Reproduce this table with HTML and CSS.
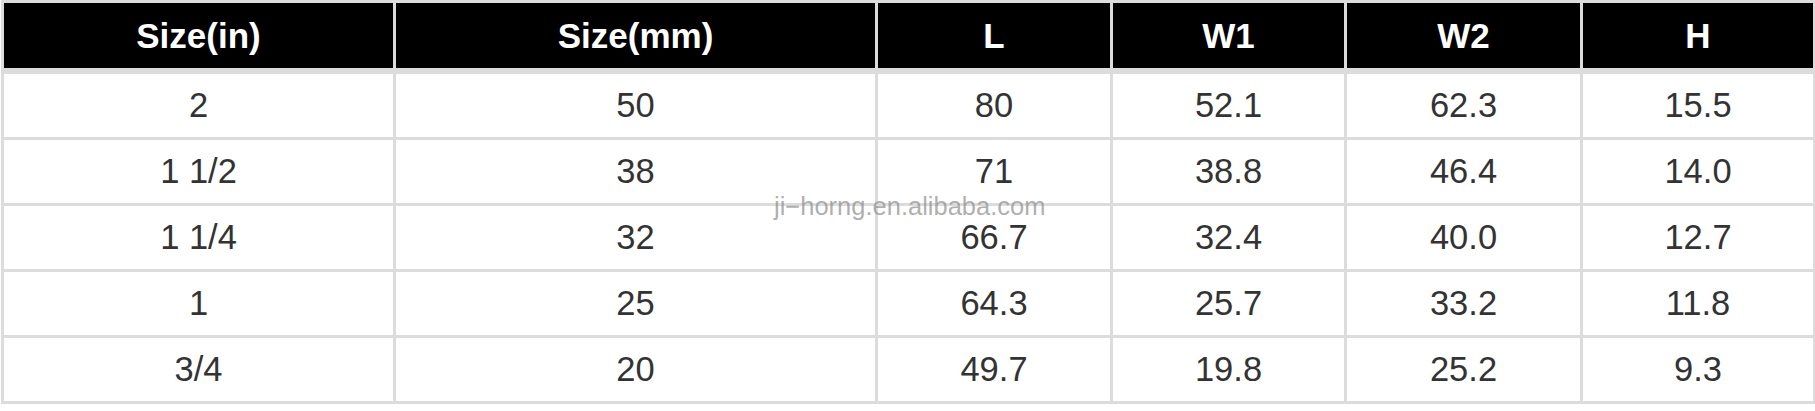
FILE: index.html
```html
<!DOCTYPE html>
<html>
<head>
<meta charset="utf-8">
<link rel="stylesheet" href="styles.css">
</head>
<body>
<div class="wrap">
  <table class="spec">
    <colgroup>
      <col class="c1"><col class="c2"><col class="c3"><col class="c4"><col class="c5"><col class="c6">
    </colgroup>
    <thead>
      <tr><th>Size(in)</th><th>Size(mm)</th><th>L</th><th>W1</th><th>W2</th><th>H</th></tr>
    </thead>
    <tbody>
      <tr><td>2</td><td>50</td><td>80</td><td>52.1</td><td>62.3</td><td>15.5</td></tr>
      <tr><td>1 1/2</td><td>38</td><td>71</td><td>38.8</td><td>46.4</td><td>14.0</td></tr>
      <tr><td>1 1/4</td><td>32</td><td>66.7</td><td>32.4</td><td>40.0</td><td>12.7</td></tr>
      <tr><td>1</td><td>25</td><td>64.3</td><td>25.7</td><td>33.2</td><td>11.8</td></tr>
      <tr><td>3/4</td><td>20</td><td>49.7</td><td>19.8</td><td>25.2</td><td>9.3</td></tr>
    </tbody>
  </table>
  <div class="watermark">ji−horng.en.alibaba.com</div>
</div>
</body>
</html>
```
FILE: styles.css
```css
html, body {
  margin: 0;
  padding: 0;
  background: #ffffff;
}
.wrap {
  position: relative;
  padding: 0 0 0 1px;
  width: 1814px;
}
.spec {
  border-collapse: collapse;
  table-layout: fixed;
  width: 1812px;
  border: 3px solid #dcdcdc;
  font-family: "Liberation Sans", Arial, sans-serif;
}
.c1 { width: 392px; }
.c2 { width: 482px; }
.c3 { width: 235px; }
.c4 { width: 234px; }
.c5 { width: 236px; }
.c6 { width: 233px; }
.spec th,
.spec td {
  border: 3px solid #dcdcdc;
  text-align: center;
  vertical-align: middle;
  padding: 0;
}
.spec th {
  background: #000000;
  color: #ffffff;
  font-weight: bold;
  font-size: 35px;
  height: 65px;
  border-bottom-width: 6px;
}
.spec td {
  color: #333333;
  font-size: 34.5px;
  height: 63px;
}
.watermark {
  position: absolute;
  left: 774px;
  top: 192px;
  font-family: "Liberation Sans", Arial, sans-serif;
  font-size: 25.5px;
  color: rgba(140, 140, 140, 0.7);
  white-space: nowrap;
}
```
